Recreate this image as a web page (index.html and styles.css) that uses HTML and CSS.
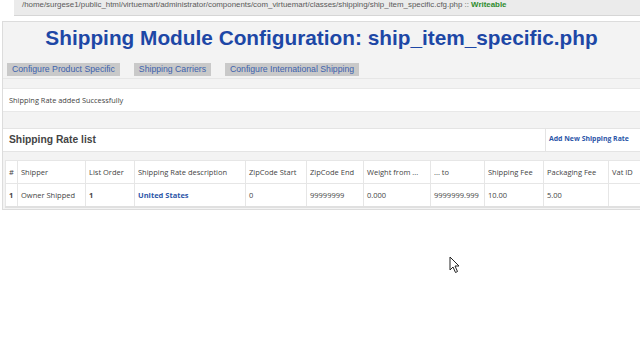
FILE: index.html
```html
<!DOCTYPE html>
<html lang="en">
<head>
    <meta charset="UTF-8">
    <title>Shipping Module Configuration</title>
    <link rel="stylesheet" href="styles.css">
</head>
<body>
    <div class="pathbar">
        /home/surgese1/public_html/virtuemart/administrator/components/com_virtuemart/classes/shipping/ship_item_specific.cfg.php :: <span class="ok">Writeable</span>
    </div>
    <div class="panel">
        <h1 class="title">Shipping Module Configuration: ship_item_specific.php</h1>
        <div class="tabs">
            <a class="tab">Configure Product Specific</a>
            <a class="tab">Shipping Carriers</a>
            <a class="tab">Configure International Shipping</a>
        </div>
        <div class="message">Shipping Rate added Successfully</div>
        <div class="spacer"></div>
        <div class="listhead">
            <div class="listtitle">Shipping Rate list</div>
            <div class="listaction"><a>Add New Shipping Rate</a></div>
        </div>
        <div class="spacer small"></div>
        <table class="rates">
            <colgroup>
                <col style="width: 12px">
                <col style="width: 68px">
                <col style="width: 49px">
                <col style="width: 111px">
                <col style="width: 61px">
                <col style="width: 57px">
                <col style="width: 67px">
                <col style="width: 54px">
                <col style="width: 59px">
                <col style="width: 65px">
                <col style="width: 32px">
            </colgroup>
            <tr>
                <th>#</th>
                <th>Shipper</th>
                <th>List Order</th>
                <th>Shipping Rate description</th>
                <th>ZipCode Start</th>
                <th>ZipCode End</th>
                <th>Weight from ...</th>
                <th>... to</th>
                <th>Shipping Fee</th>
                <th>Packaging Fee</th>
                <th>Vat ID</th>
            </tr>
            <tr>
                <td class="strong">1</td>
                <td>Owner Shipped</td>
                <td class="strong">1</td>
                <td><a class="link">United States</a></td>
                <td>0</td>
                <td>99999999</td>
                <td>0.000</td>
                <td>9999999.999</td>
                <td>10.00</td>
                <td>5.00</td>
                <td></td>
            </tr>
        </table>
    </div>
    <svg class="cursor" width="12" height="18" viewBox="0 0 12 18">
        <path d="M1 1 L1 14 L4 11 L6.5 16.5 L8.5 15.5 L6 10 L10 10 Z" fill="#fff" stroke="#222" stroke-width="1"/>
    </svg>
</body>
</html>
```

FILE: styles.css
```css
body {
    margin: 0;
    padding: 0;
    background: #fff;
    font-family: 'Liberation Sans', Arial, sans-serif;
    position: relative;
    height: 360px;
    overflow: hidden;
}
.pathbar {
    margin-left: 14px;
    height: 15px;
    padding-left: 8px;
    background: #ebebeb;
    border-bottom: 1px solid #d6d6d6;
    font-size: 7.9px;
    line-height: 9px;
    color: #5a5a5a;
    white-space: nowrap;
    overflow: hidden;
}
.ok {
    color: #2e8b2e;
    font-weight: bold;
}
.panel {
    margin: 5px 0 0 2px;
    background: #f3f3f3;
    border: 1px solid #dcdcdc;
    border-right: none;
    padding: 0 0 1px 0;
}
.title {
    margin: 0;
    padding: 4px 0 12px 0;
    text-align: center;
    font-size: 20.8px;
    line-height: 24px;
    color: #1d47a6;
}
.tabs {
    display: flex;
    gap: 14px;
    padding: 1px 0 0 4px;
    height: 15px;
    border-bottom: 1px solid #e6e6e6;
}
.tab {
    display: block;
    height: 13px;
    padding: 0 5px;
    background: #c9c9c9;
    color: #3d62ac;
    font-size: 8.7px;
    line-height: 13px;
}
.message {
    margin-top: 9px;
    height: 22px;
    background: #fff;
    border-top: 1px solid #e8e8e8;
    border-bottom: 1px solid #e8e8e8;
    padding-left: 6px;
    font-family: 'Open Sans', sans-serif;
    font-size: 7.4px;
    line-height: 22px;
    color: #444;
}
.spacer {
    height: 16px;
}
.spacer.small {
    height: 8px;
}
.listhead {
    display: flex;
    height: 22px;
    background: #fff;
    border-top: 1px solid #e4e4e4;
    border-bottom: 1px solid #e4e4e4;
}
.listtitle {
    flex: 1;
    padding-left: 6px;
    font-size: 10.3px;
    font-weight: bold;
    line-height: 21px;
    color: #444;
}
.listaction {
    width: 91px;
    padding-left: 3px;
    border-left: 1px solid #e4e4e4;
    font-family: 'Open Sans', sans-serif;
    font-size: 6.9px;
    font-weight: bold;
    line-height: 20px;
    color: #2c56a8;
}
.rates {
    margin-left: 2px;
    width: 635px;
    table-layout: fixed;
    border-collapse: collapse;
    background: #fff;
    font-family: 'Open Sans', sans-serif;
    font-size: 7.5px;
    color: #444;
    border-bottom: 2px solid #e0e0e0;
}
.rates th, .rates td {
    border: 1px solid #e6e6e6;
    text-align: left;
    padding: 0 3px;
    height: 22px;
    white-space: nowrap;
    overflow: hidden;
}
.rates th {
    font-weight: normal;
}
.rates td.strong {
    font-weight: bold;
}
.link {
    color: #2c56a8;
    font-weight: bold;
}
.cursor {
    position: absolute;
    left: 449px;
    top: 256px;
}
```
